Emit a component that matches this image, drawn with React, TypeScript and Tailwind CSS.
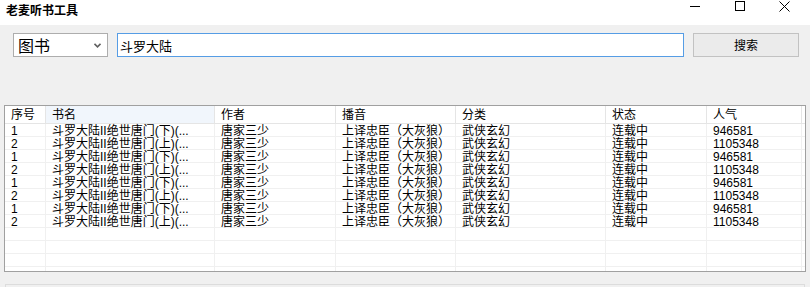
import React from 'react';

const cols = [
  { key: 'id', title: '序号', w: 41 },
  { key: 'name', title: '书名', w: 169 },
  { key: 'author', title: '作者', w: 121 },
  { key: 'reader', title: '播音', w: 120 },
  { key: 'cat', title: '分类', w: 150 },
  { key: 'state', title: '状态', w: 101 },
  { key: 'hot', title: '人气', w: 95 },
];

type Row = Record<string, string>;

const rowA: Row = {
  id: '1',
  name: '斗罗大陆II绝世唐门(下)(...',
  author: '唐家三少',
  reader: '上译忠臣（大灰狼）',
  cat: '武侠玄幻',
  state: '连载中',
  hot: '946581',
};
const rowB: Row = { ...rowA, id: '2', name: '斗罗大陆II绝世唐门(上)(...', hot: '1105348' };

const rows: Row[] = [rowA, rowB, rowA, rowB, rowA, rowB, rowA, rowB];

// 表格内文字用 Liberation Sans 打头，行框不会超出 13px 的行高
const cellFont = { fontFamily: '"Liberation Sans", "Noto Sans CJK SC", sans-serif' };

function WindowControls() {
  return (
    <div className="flex items-start h-full">
      <div className="w-[45px] h-[12px] flex justify-center items-end">
        <div className="w-[10px] h-[1px] bg-black mb-[5px]"></div>
      </div>
      <div className="w-[45px] h-[12px] flex justify-center items-start pt-[1px]">
        <div className="w-[10px] h-[10px] border border-black"></div>
      </div>
      <div className="w-[45px] h-[12px] flex justify-center items-start pt-[1px]">
        <svg width="11" height="11" viewBox="0 0 11 11">
          <path d="M0.5 0.5 L10.5 10.5 M10.5 0.5 L0.5 10.5" stroke="#000" strokeWidth="1" />
        </svg>
      </div>
    </div>
  );
}

export default function App() {
  return (
    <div
      className="w-[810px] h-[287px] bg-[#f0f0f0] overflow-hidden flex flex-col text-black"
      style={{ fontFamily: '"Noto Sans CJK SC", "Liberation Sans", sans-serif' }}
    >
      {/* 标题栏 */}
      <div className="h-[25px] bg-white flex justify-between shrink-0">
        <div className="pl-[6px] pt-[3px] text-[12px] leading-[14px] font-bold">老麦听书工具</div>
        <div className="pr-[3px]">
          <WindowControls />
        </div>
      </div>

      {/* 搜索栏 */}
      <div className="flex items-center pt-[8px] pl-[13px] gap-[9px] shrink-0">
        <div className="w-[95px] h-[24px] bg-white border border-[#adadad] flex items-center justify-between pl-[4px] pr-[6px]">
          <span className="text-[16px] leading-[18px]">图书</span>
          <svg width="7" height="5" viewBox="0 0 7 5">
            <path d="M0.5 0.8 L3.5 3.8 L6.5 0.8" stroke="#606060" strokeWidth="1.6" fill="none" />
          </svg>
        </div>
        <div className="w-[567px] h-[24px] bg-white border border-[#569de5] flex items-center pl-[2px]">
          <span className="text-[13px] leading-[15px]">斗罗大陆</span>
        </div>
        <div className="w-[106px] h-[24px] bg-[#ebebeb] border border-[#c2c2c2] flex items-center justify-center">
          <span className="text-[12px] leading-[14px]">搜索</span>
        </div>
      </div>

      {/* 列表 */}
      <div
        className="mt-[48px] ml-[4px] w-[802px] h-[167px] bg-white border border-[#a0a0a0] overflow-hidden shrink-0"
        style={cellFont}
      >
        <div className="flex h-[18px] border-b border-[#e5e5e5]">
          {cols.map((c) => (
            <div
              key={c.key}
              className={`h-full border-r border-[#e5e5e5] pl-[6px] pt-[2px] text-[12px] leading-[14px] ${c.key === 'name' ? 'bg-[#f1f6fc]' : ''}`}
              style={{ width: c.w }}
            >
              {c.title}
            </div>
          ))}
        </div>
        {rows.map((r, i) => (
          <div key={i} className="flex h-[13px] border-b border-[#f0f0f0]">
            {cols.map((c) => (
              <div
                key={c.key}
                className="h-full border-r border-[#f0f0f0] pl-[6px] pt-[1px] text-[12px] leading-[12px] whitespace-nowrap"
                style={{ width: c.w }}
              >
                {r[c.key]}
              </div>
            ))}
          </div>
        ))}
        {[0, 1, 2, 3].map((i) => (
          <div key={'e' + i} className="flex h-[13px] border-b border-[#f0f0f0]">
            {cols.map((c) => (
              <div key={c.key} className="h-full border-r border-[#f0f0f0]" style={{ width: c.w }}></div>
            ))}
          </div>
        ))}
      </div>

      {/* 状态栏 */}
      <div className="mt-[12px] ml-[5px] w-[800px] h-[10px] border border-[#dcdcdc] shrink-0"></div>
    </div>
  );
}
